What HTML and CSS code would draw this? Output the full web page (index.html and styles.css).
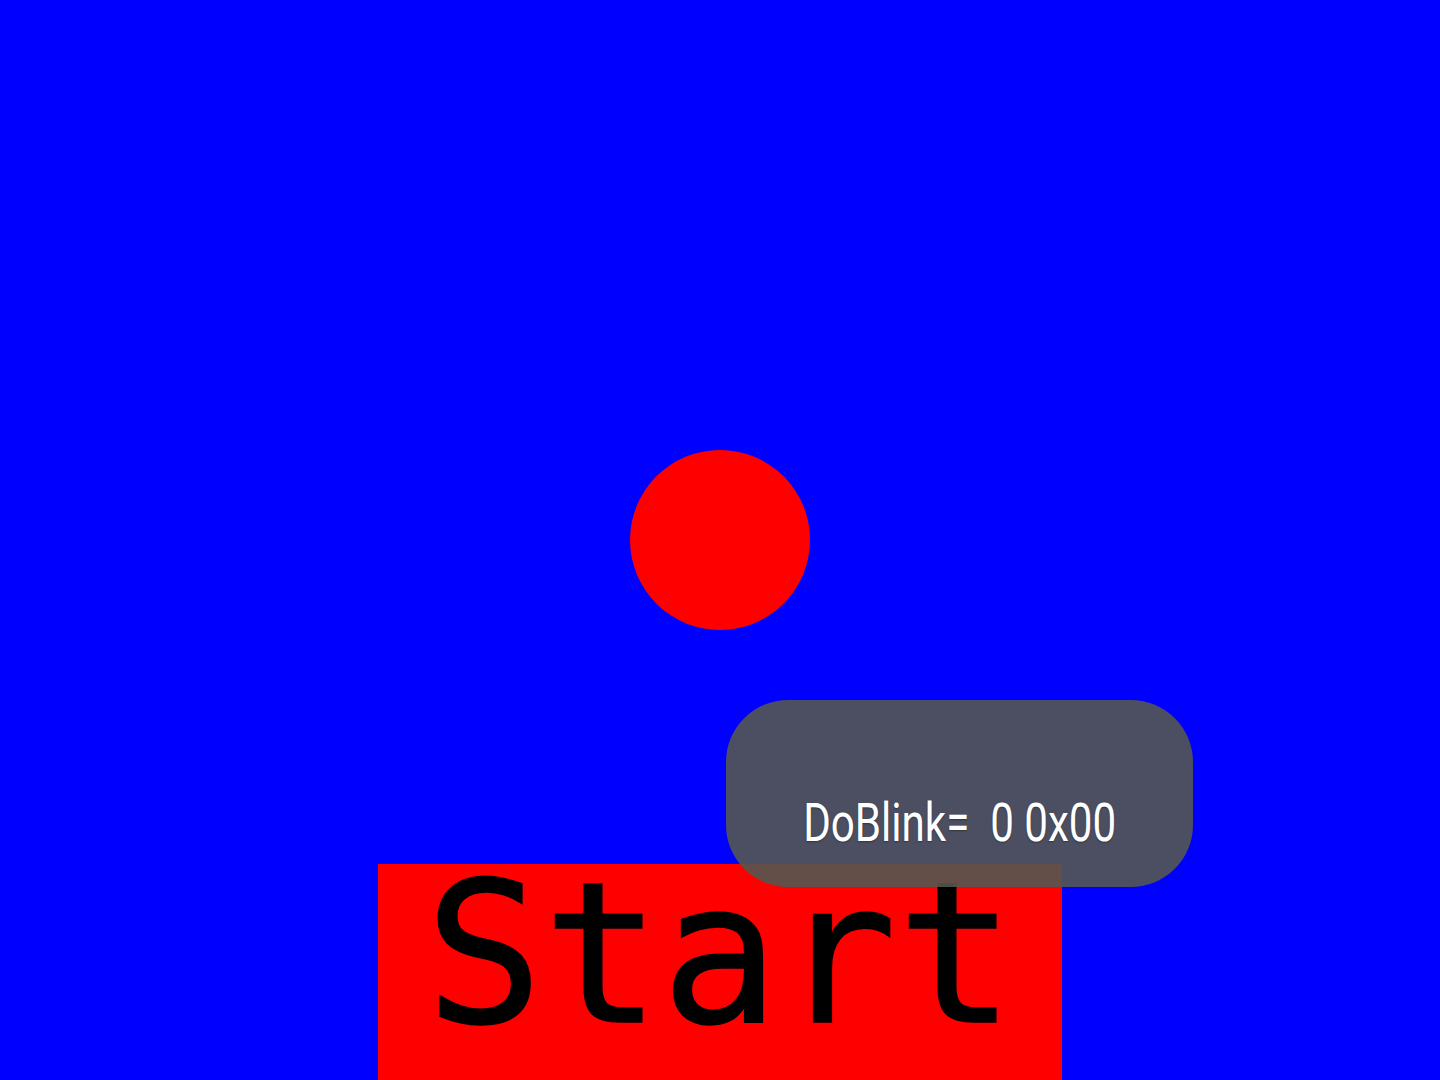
FILE: index.html
```html
<!DOCTYPE html>
<html>
<head>
<meta charset="utf-8">
<link rel="stylesheet" href="styles.css">
</head>
<body>
<div class="screen">
  <div class="ball"></div>
  <div class="start"><span class="start-label">Start</span></div>
  <div class="toast"><span class="toast-text">DoBlink=&nbsp;&nbsp;0 0x00</span></div>
</div>
</body>
</html>
```
FILE: styles.css
```css
html, body {
  margin: 0;
  padding: 0;
  background: #0000ff;
  overflow: hidden;
}
.screen {
  position: relative;
  width: 1440px;
  height: 1080px;
  display: flex;
  flex-direction: column;
  align-items: center;
  padding-top: 450px;
  box-sizing: border-box;
}
.ball {
  width: 180px;
  height: 180px;
  border-radius: 50%;
  background: #ff0000;
}
.start {
  margin-top: auto;
  width: 684px;
  height: 216px;
  background: #ff0000;
  display: flex;
  justify-content: center;
  align-items: flex-start;
}
.start-label {
  color: #000;
  font-family: "DejaVu Sans Mono", monospace;
  font-size: 196px;
  line-height: 180px;
  -webkit-text-stroke: 1.5px #000;
}
.toast {
  position: absolute;
  left: 726px;
  top: 700px;
  width: 467px;
  height: 187px;
  border-radius: 62px;
  background: rgba(83, 88, 80, 0.9);
  display: flex;
  align-items: flex-end;
  justify-content: center;
  padding-bottom: 33px;
  box-sizing: border-box;
}
.toast-text {
  display: inline-block;
  color: #fff;
  font-family: Roboto, "Noto Sans", sans-serif;
  font-size: 54px;
  line-height: 62px;
  white-space: pre;
  transform: scaleX(0.78);
  text-shadow: 0 1px 2px rgba(0,0,0,0.35);
}
```
